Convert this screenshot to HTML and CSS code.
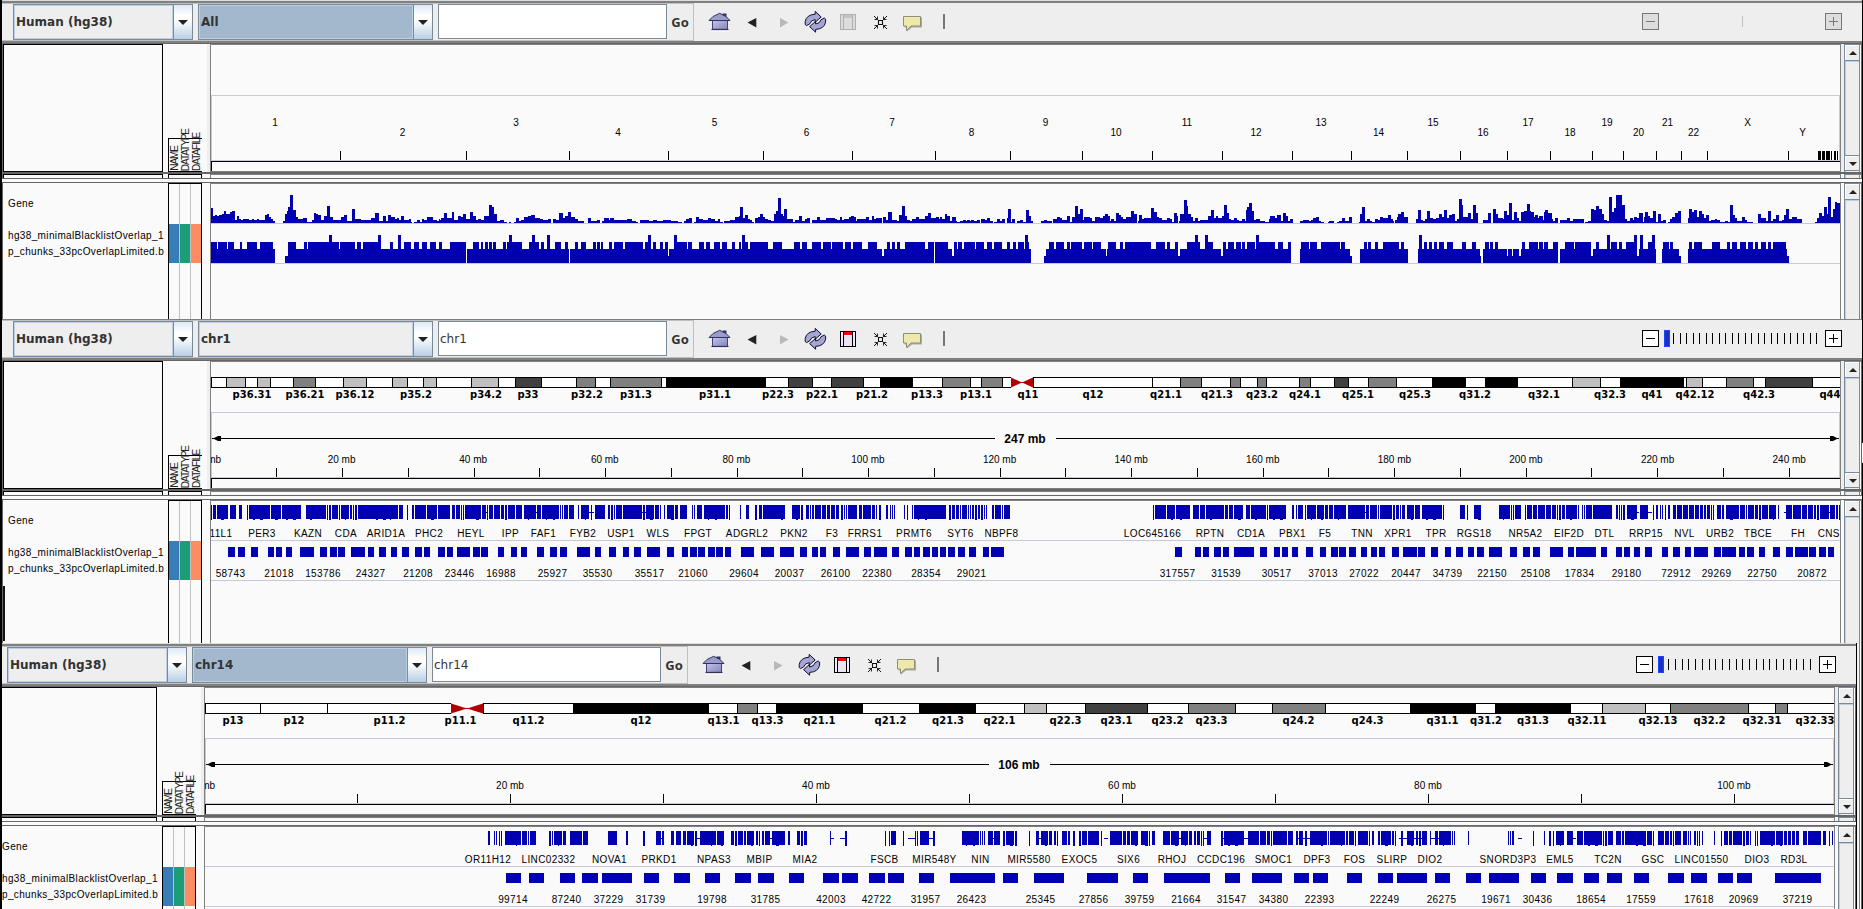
FILE: index.html
```html
<!DOCTYPE html>
<html lang="en">
<head>
<meta charset="utf-8">
<title>IGV</title>
<link rel="stylesheet" href="styles.css">
</head>
<body>
<svg class="symbols" aria-hidden="true">
  <defs>
    <linearGradient id="steel" x1="0" y1="0" x2="1" y2="1">
      <stop offset="0" stop-color="#c4c4ec"/><stop offset="1" stop-color="#8484b8"/>
    </linearGradient>
    <symbol id="i-home" viewBox="0 0 24 25">
      <path d="M3.5 21.8H21" stroke="#fff" stroke-width="1.4"/>
      <path d="M14.5 4.5h4v5h-4z" fill="#33335c"/>
      <rect x="4.5" y="11.5" width="15" height="9" fill="url(#steel)" stroke="#44447a"/>
      <path d="M1 11.5L5 7.5L11.7 4.3L18 7.5L22 11.5Z" fill="#9c9ccc" stroke="#33335c"/>
      <path d="M3.5 20.5H20.5" stroke="#33335c" stroke-width="1.3"/>
    </symbol>
    <symbol id="i-back" viewBox="0 0 24 25"><path d="M7.5 13.5L16.3 9V18.4Z" fill="#222"/></symbol>
    <symbol id="i-fwd" viewBox="0 0 24 25"><path d="M16.5 13.5L8 9V18.4Z" fill="#b9b9b9"/></symbol>
    <symbol id="i-refresh" viewBox="0 0 24 25">
      <g id="arc" fill="#a6a6d6" stroke="#0d0d2b" stroke-width="1">
        <path d="M1.200 15.500L2.600 16.600L5.800 14.800Q6.600 11.200 11.200 10.600V13.200L17.200 8L11.200 2.400V5.200Q2.600 5.600 1.200 12.500Z"/>
      </g>
      <use href="#arc" transform="rotate(180 11.4 12.8)"/>
    </symbol>
    <symbol id="i-region" viewBox="0 0 24 25">
      <rect x="4.5" y="5.5" width="15" height="15" fill="#fff" stroke="#000"/>
      <path d="M5 7h2v13H5zM17 7h2v13h-2z" fill="#ececfd"/>
      <path d="M8 10h8v10H8z" fill="#e6e6fb"/>
      <path d="M9 11h3v2H9zM13 13h3v2h-3zM8 15h3v2H8zM12 17h3v2h-3z" fill="#fbdcdc"/>
      <path d="M8 6h8v3H8z" fill="#f00"/>
      <path d="M7.5 5v16M16.5 5v16" stroke="#000"/>
    </symbol>
    <symbol id="i-region-off" viewBox="0 0 24 25">
      <rect x="4.5" y="5.5" width="15" height="15" fill="#dcdcdc" stroke="#b0b0b0"/>
      <path d="M8 6h8v3H8z" fill="#c4c4c4"/>
      <path d="M7.5 5v16M16.5 5v16" stroke="#b0b0b0"/>
    </symbol>
    <symbol id="i-fit" viewBox="0 0 24 25">
      <path d="M10.5 11.5h4v4h-4z" fill="none" stroke="#111" stroke-width="1.1"/>
      <path d="M6 7l3.8 3.8M19 7l-3.8 3.8M6 20l3.8-3.8M19 20l-3.8-3.8" stroke="#111"/>
      <path d="M6.5 10.5h3v-3M18.5 10.5h-3v-3M6.5 16.5h3v3M18.5 16.5h-3v3" fill="none" stroke="#111" stroke-width=".9"/>
    </symbol>
    <symbol id="i-tip" viewBox="0 0 24 25">
      <path d="M4.5 8.5h17.5v10h-10l-5 4v-4H4.5z" fill="#aaa"/>
      <path d="M3.5 7.5h17v9.5h-9.5L6.5 21.5V17H3.5z" fill="#eee8aa" stroke="#8f8f78"/>
    </symbol>
  </defs>
</svg>
<main class="desktop" id="desktop"></main>
<script src="tracks.js"></script>
</body>
</html>
```
FILE: styles.css
```css
* { box-sizing: border-box; }

body {
  margin: 0;
  background: #000;
  color: #000;
  font: 10px "Liberation Sans", Arial, sans-serif;
}

.symbols { position: absolute; width: 0; height: 0; }

.desktop {
  width: 1863px;
  height: 909px;
  padding: 0 1px 0 2px;
  display: flex;
  flex-direction: column;
  overflow: hidden;
}

.slot { display: flex; background: #eee; overflow: hidden; position: relative; }
.slot-1 { height: 319px; }
.slot-2 { height: 324px; }
.slot-3 { height: 266px; }

.clip { overflow: hidden; display: flex; }
.slot-3 .clip { width: 1855px; border-right: 1px solid #000; }
.slot-3 .window { margin-left: -6px; }
.behind {
  flex: 1;
  background: linear-gradient(to right, #f4f4f4 2px, #7a8a99 2px 3px, #fff 3px 4px, #666 4px);
}

.window { width: 1860px; flex: none; display: flex; flex-direction: column; background: #fafafa; }
.edge { height: 3px; flex: none; border-top: 1px solid #ddd; background: #808080; }
.slot-2 .edge { height: 1px; border: 0; }

/* toolbar */
.toolbar { height: 38px; flex: none; display: flex; background: #eee; }
.command {
  width: 692px;
  padding-left: 11px;
  display: flex;
  border: solid #c0c0c0;
  border-width: 1px 1px 1px 0;
  font: bold 12px "DejaVu Sans", sans-serif;
  color: #333;
}
.combo {
  display: flex;
  height: 36px;
  margin-right: 5px;
  border: 1px solid #7a8a99;
  background: #eee;
}
.combo.genome { width: 180px; }
.combo.chrom { width: 235px; }
.combo.lit { background: #a3b8cc; }
.combo .value {
  flex: 1;
  border: 1px solid #b8cfe5;
  line-height: 32px;
  padding-left: 1px;
}
.combo .arrow {
  width: 19px;
  border-left: 1px solid #7a8a99;
  background: linear-gradient(#dde8f3, #fff 30%, #fff 45%, #b8cfe5);
  display: flex;
  align-items: center;
  justify-content: center;
}
.combo .arrow::after {
  content: "";
  border: solid transparent;
  border-width: 5px 5px 0;
  border-top-color: #222;
}
.locus {
  width: 229px;
  height: 35px;
  border: 1px solid #7a8a99;
  background: #fff;
  font-weight: normal;
  line-height: 34px;
  padding-left: 1px;
}
.go { flex: 1; text-align: center; line-height: 37px; font-family: "Noto Sans", sans-serif; font-size: 13px; }
.icons { display: flex; padding: 6px 0 0 10px; }
.icons svg { width: 24px; height: 25px; margin: 0 4px; }
.bar { width: 2px; height: 15px; margin: 11px 0 0 15px; background: #777; }
.zoomer { margin: 10px 20px 0 auto; display: flex; height: 17px; }
.zoomer svg { display: block; }

/* split panes */
.split { height: 3px; flex: none; background: linear-gradient(#808080 2px, #666 2px); }
.split-mid { height: 2px; flex: none; background: #666; }
.split-low { height: 5px; flex: none; border: solid #666; border-width: 1px 0; background: #fafafa; }

.row { display: flex; flex: none; border-left: 1px solid #666; border-right: 1px solid #666; }
.row.head { height: 128px; }
.row.strip { height: 4px; }
.row.body { flex: 1; }
.names { width: 160px; flex: none; background: #fafafa; }
.head .names { border: 1px solid #000; }
.strip .names { border: 1px solid #000; border-bottom: 0; }
.attrs { width: 34px; flex: none; margin: 0 5px; }
.strip .attrs, .body .attrs { border: 1px solid #000; border-bottom: 0; }
.gutter { width: 3px; flex: none; background: #eee; }
.body .gutter, .strip .gutter { background: #fafafa; }
.data { width: 1631px; flex: none; border: 1px solid #808080; overflow: hidden; }
.strip .data, .body .data { border-bottom: 0; }
.data svg { display: block; }

.body .names { padding: 13px 0 0 5px; line-height: 16px; letter-spacing: .36px; white-space: nowrap; }
.body .names p { margin: 0; }
.body .names p + p { margin-top: 16px; }

.head .attrs { display: flex; align-items: flex-end; }
.attr-box {
  width: 34px;
  height: 34px;
  border: solid #000;
  border-width: 1px 0 1px 1px;
  display: flex;
  align-items: flex-end;
}
.attr-box span {
  width: 11px;
  line-height: 11px;
  writing-mode: vertical-rl;
  transform: rotate(180deg);
  letter-spacing: -1.05px;
  white-space: nowrap;
  color: #222;
}
.body .attrs { display: grid; grid-template-columns: 10px 10px 10px; gap: 1px; background: #c0c0c0; }
.body .attrs i { background: linear-gradient(#fafafa 40px, var(--fill) 40px 79px, #fafafa 79px); }
.swatch-name { --fill: #377eb8; }
.swatch-type { --fill: #1b9e77; }
.swatch-file { --fill: #fc8d62; }

.scroll {
  width: 17px;
  flex: none;
  border: solid #7a8a99;
  border-width: 1px 0 0 1px;
  display: flex;
  flex-direction: column;
  background: linear-gradient(to right, #b8cfe5 1px, #eee 1px 14px, #7a8a99 14px 15px, #fff 15px);
}
.scroll b {
  height: 15px;
  width: 14px;
  border: solid #fff;
  border-width: 1px 0 0 1px;
  background: #eee;
  display: flex;
  align-items: center;
  justify-content: center;
}
.scroll b.up { box-shadow: 0 1px #7a8a99, 0 2px #b8cfe5; }
.scroll b.down { height: 14px; margin-top: auto; box-shadow: 0 -1px #7a8a99, 0 1px #7a8a99; }
.head .scroll { padding-bottom: 2px; }
.scroll b::after { content: ""; border: solid transparent; }
.scroll .up::after { border-width: 0 4px 4px; border-bottom-color: #222; }
.scroll .down::after { border-width: 4px 4px 0; border-top-color: #222; margin-top: 1px; }

/* drawn tracks */
.label { text-anchor: middle; font-size: 10px; }
.feature-label { text-anchor: middle; font-size: 10px; letter-spacing: .38px; }
.feature-label.to-left { text-anchor: end; }
.band-label { text-anchor: middle; font: bold 10px "DejaVu Sans", sans-serif; }
.span-label { text-anchor: middle; font-weight: bold; font-size: 12px; }
.blue { fill: #0000b2; }
.rule { fill: #c8c8d8; }
.red { fill: #b20000; }

/* fragments of windows lying underneath */
.sliver-left { position: absolute; left: 1px; top: 267px; width: 2px; height: 55px; background: #111; }
.sliver-right { position: absolute; right: -1px; top: 124px; width: 1px; height: 20px; background: #fff; }
.slot-2 { overflow: visible; }
```
FILE: tracks.js
```js
// Pixel positions are window x coordinates; y is measured from the top of each window.
const BLUE = 'class="blue"';
const rect = (x, y, w, h, attr = '') => `<rect x="${x}" y="${y}" width="${w}" height="${h}" ${attr}/>`;
const pairs = s => s.trim().split(/[\s,]+/).map(p => p.split(':'));
const text = (x, y, t, cls) => `<text x="${x}" y="${y}" class="${cls}">${t}</text>`;

// x:height steps; each piece has its own origin and stretch
const geneDensity = [
  { from: 211, k: 1, end: 440, bins: `211:15 213:7 215:8 217:7 219:8 222:9 224:12 226:9 230:11 232:12 235:3 237:7 239:4 241:3 243:4 249:3 252:4 254:3 257:4 259:3 265:8 267:9 269:6 271:4 273:2 275:0 283:2 285:9 287:12 288:16 290:28 293:13 296:6 298:4 303:5 307:1 312:3 314:10 316:9 318:8 321:3 324:7 327:17 330:6 333:3 341:6 344:8 347:2 352:14 355:4 361:3 367:3 371:5 375:10 379:2 383:7 386:2 388:8 391:6 395:4 397:5 399:3 401:7 404:3 409:4 411:1 412:0 414:1 417:3 420:1 422:4 424:3 427:6 433:3 437:2 439:4` },
  { from: 440, k: 1.0332, end: 960, bins: `440:3 441:5 444:10 447:5 452:11 454:3 457:7 460:6 462:9 465:4 469:11 472:7 475:3 477:4 480:3 483:7 487:18 490:16 492:9 495:2 498:3 502:1 505:0 507:1 509:0 512:1 514:5 516:2 518:3 521:6 525:7 528:8 532:5 537:4 540:3 545:4 547:0 549:4 552:3 555:10 559:5 561:7 564:11 567:6 571:4 574:2 579:0 583:5 586:2 592:3 595:0 597:2 599:5 604:3 605:5 608:3 613:3 621:4 626:2 630:1 632:0 634:3 642:2 646:3 650:2 656:3 664:2 670:1 674:0 676:2 678:4 681:5 684:0 686:1 688:6 691:4 695:3 699:5 702:4 706:2 709:4 711:1 714:0 715:2 721:3 726:6 729:7 730:16 733:5 735:8 738:4 740:3 742:1 744:0 745:5 748:6 750:9 753:6 755:4 757:3 760:2 763:9 765:12 767:25 770:9 772:7 773:14 776:4 782:1 784:3 787:7 790:2 793:4 795:5 798:0 800:3 805:6 808:3 814:5 822:4 824:3 827:6 829:3 831:4 836:6 838:7 841:6 843:2 844:4 849:4 852:6 855:3 858:7 860:4 862:5 868:0 869:6 872:3 874:11 877:3 882:2 884:8 887:17 890:7 892:3 895:2 897:4 901:6 904:4 909:7 912:10 915:5 920:6 923:4 924:6 926:4 929:9 931:7 934:2 936:6 939:2 940:1` },
  { from: 960, k: 1, end: 1840, bins: `960:2 963:3 966:2 967:3 970:2 971:3 974:2 977:3 980:0 981:4 985:3 987:5 990:2 993:0 994:1 997:4 1000:2 1002:4 1005:0 1007:5 1008:14 1011:1 1012:4 1015:0 1017:2 1020:3 1023:1 1026:13 1029:7 1031:2 1033:0 1041:2 1044:3 1047:2 1052:0 1053:4 1057:6 1060:5 1062:3 1064:3 1067:7 1070:1 1072:6 1075:17 1078:9 1080:14 1083:3 1084:6 1090:5 1092:2 1095:6 1100:5 1103:7 1105:9 1108:7 1110:2 1111:4 1114:2 1116:10 1119:8 1121:6 1123:4 1126:6 1131:12 1134:9 1137:0 1138:2 1139:8 1142:4 1144:5 1151:15 1154:11 1157:6 1159:5 1162:3 1167:5 1170:4 1172:1 1174:10 1177:7 1178:0 1179:2 1180:9 1184:23 1187:17 1188:9 1191:6 1193:2 1195:5 1198:2 1200:3 1208:7 1211:13 1214:5 1216:7 1218:5 1222:7 1224:18 1227:10 1229:4 1231:3 1234:5 1237:3 1239:2 1242:4 1245:2 1246:13 1247:16 1249:20 1252:12 1254:3 1256:4 1260:2 1265:1 1269:4 1270:7 1275:5 1277:8 1281:2 1283:10 1286:7 1288:2 1290:4 1293:0 1300:2 1303:3 1309:2 1311:3 1313:5 1316:6 1319:2 1321:1 1324:0 1328:1 1329:2 1334:0 1337:1 1339:2 1342:5 1345:2 1349:6 1352:0 1359:1 1360:9 1362:16 1365:2 1367:4 1370:2 1372:1 1375:4 1378:3 1380:6 1383:5 1388:8 1391:4 1393:2 1394:0 1395:3 1397:6 1398:9 1401:11 1404:6 1408:0 1416:4 1418:13 1421:3 1423:2 1425:4 1427:12 1430:5 1433:4 1436:5 1439:9 1442:6 1444:13 1447:5 1449:8 1452:9 1455:2 1457:4 1459:24 1462:18 1463:6 1468:10 1471:4 1473:18 1476:10 1478:0 1483:3 1488:10 1491:0 1493:14 1496:9 1498:5 1503:4 1504:12 1507:8 1509:20 1512:3 1514:11 1517:5 1519:2 1521:11 1524:12 1527:19 1530:12 1531:11 1534:6 1535:8 1538:5 1539:7 1543:3 1544:11 1545:13 1548:10 1552:4 1553:2 1555:5 1558:0 1560:3 1567:5 1570:2 1573:4 1584:0 1585:1 1588:2 1591:14 1594:13 1596:17 1599:14 1602:9 1604:3 1607:2 1609:26 1612:11 1614:15 1616:28 1622:18 1625:4 1627:2 1630:5 1633:3 1634:6 1637:5 1639:10 1643:1 1644:6 1645:11 1648:7 1650:5 1653:12 1656:1 1658:9 1661:2 1663:3 1666:0 1668:1 1670:4 1672:6 1675:10 1678:12 1681:0 1688:5 1689:14 1692:11 1694:13 1697:6 1699:12 1702:9 1704:5 1706:8 1709:2 1711:3 1715:4 1717:3 1720:1 1725:2 1728:1 1730:18 1733:8 1735:5 1737:2 1742:6 1745:3 1747:1 1753:0 1758:9 1761:5 1766:2 1768:12 1771:2 1773:4 1776:8 1779:2 1782:3 1784:8 1786:14 1789:4 1792:6 1797:4 1802:0 1815:1 1817:5 1819:10 1822:7 1824:16 1827:9 1828:26 1831:6 1833:14 1835:21 1837:20` }
];

const chunkDensity = [
  { from: 211, k: 1, end: 440, bins: `211:3 217:2 218:3 227:2 228:3 234:2 240:3 242:2 247:3 257:2 260:3 273:2 275:0 285:1 288:3 296:2 304:3 307:2 308:3 329:4 332:3 339:2 340:3 355:2 357:3 361:2 363:3 378:4 381:2 390:3 393:2 398:4 401:2 404:3 411:2 414:3 419:2 422:3 427:2 430:3 436:2 439:3` },
  { from: 440, k: 1.0332, end: 960, bins: `440:3 442:2 450:3 465:0 466:2 472:3 478:2 480:3 482:2 484:3 486:2 487:3 490:2 491:3 494:2 501:3 504:2 505:3 507:4 510:3 519:2 526:3 529:4 532:3 536:2 538:3 541:2 544:4 546:2 551:3 557:2 561:3 564:2 565:0 566:2 571:3 574:2 576:3 581:2 588:3 591:2 592:3 595:2 596:3 598:2 604:3 606:2 608:3 617:2 619:3 636:2 638:3 641:4 644:2 646:3 649:2 653:3 656:2 658:3 661:1 662:2 666:4 669:3 679:2 680:3 684:2 691:3 696:2 697:3 701:2 705:3 711:2 713:3 718:2 723:3 726:2 729:3 731:2 732:4 735:3 738:2 740:3 757:2 762:3 771:2 783:3 788:2 790:3 795:2 800:3 809:2 811:3 818:2 819:3 830:2 832:3 838:2 840:3 848:2 854:3 863:2 868:1 870:2 873:3 876:2 877:3 880:2 882:3 885:2 890:3 909:2 912:3 918:0 919:3 932:2 936:1 937:3 940:2 941:3` },
  { from: 960, k: 1, end: 1840, bins: `960:3 962:2 964:3 975:2 976:3 984:2 987:3 992:2 994:3 1002:2 1007:3 1010:2 1013:3 1016:2 1018:3 1024:2 1025:4 1028:3 1029:2 1031:0 1044:1 1046:2 1049:3 1054:2 1056:3 1064:2 1067:3 1070:2 1071:3 1082:2 1084:3 1092:2 1093:3 1101:2 1106:1 1107:2 1108:3 1116:2 1120:3 1123:2 1125:3 1151:2 1156:3 1165:2 1167:3 1170:2 1175:3 1178:1 1180:2 1187:3 1195:4 1198:3 1200:2 1205:4 1208:3 1213:2 1221:1 1223:3 1226:2 1228:3 1234:2 1236:3 1241:2 1242:3 1245:2 1247:3 1255:2 1256:4 1259:3 1275:2 1278:3 1283:2 1288:3 1291:0 1300:2 1301:3 1309:2 1310:3 1317:2 1321:3 1340:2 1341:3 1345:2 1350:1 1352:0 1360:2 1364:3 1367:2 1368:3 1371:2 1375:3 1378:2 1383:3 1399:2 1401:3 1404:2 1408:0 1418:2 1419:4 1422:2 1424:3 1427:2 1429:3 1432:2 1434:3 1437:2 1439:3 1444:2 1447:3 1453:2 1462:3 1466:2 1472:3 1476:2 1480:1 1481:0 1483:2 1485:3 1489:2 1490:3 1493:2 1495:3 1498:2 1507:1 1508:2 1512:1 1513:2 1519:1 1521:2 1522:3 1525:2 1529:3 1538:2 1539:3 1543:2 1544:3 1548:2 1553:3 1558:0 1560:2 1565:3 1574:2 1575:3 1591:1 1593:2 1596:3 1599:2 1607:4 1610:2 1611:3 1617:2 1619:3 1622:2 1626:3 1634:4 1637:1 1639:2 1640:4 1643:2 1648:3 1652:4 1655:2 1656:0 1662:2 1663:3 1669:2 1670:3 1673:2 1679:1 1681:0 1688:2 1689:3 1692:2 1694:3 1702:2 1712:3 1720:2 1727:3 1730:2 1732:3 1737:2 1740:3 1746:2 1748:3 1753:2 1755:3 1758:2 1761:3 1766:2 1768:3 1771:2 1773:3 1786:2 1787:1 1789:0` }
];

function histogram(pieces, base, unit) {
  let out = '';
  for (const p of pieces) {
    const bins = pairs(p.bins).map(([x, h]) => [Math.round(p.from + (x - p.from) * p.k), h * unit]);
    bins.forEach(([x, h], i) => {
      const next = i + 1 < bins.length ? bins[i + 1][0] : p.end;
      if (h && next > x) out += rect(x, base - h, next - x, h, BLUE);
    });
  }
  return out;
}

const runs = s => s.trim().split(/\s+/).map(r => r.split('-').map(Number));

// Exons as tall blocks (a few reach one pixel lower), introns as thin lines
function genes(blocks, lines) {
  let out = '';
  for (const [a, b] of runs(blocks)) {
    out += rect(a, 188, b - a, 14, BLUE);
    if (b - a < 3) out += rect(a, 202, b - a, a % 2, BLUE);
    for (let x = a + 4; x < b - 2; x += 7) if ((x * 7) % 5 < 3) out += rect(x, 202, 1 + x % 3, 1, BLUE);
  }
  for (const [a, b] of runs(lines)) out += rect(a, 195, b - a, 1, BLUE);
  return out;
}
const blocks = s => runs(s).map(([a, b]) => rect(a, 230, b - a, 10, BLUE)).join('');
const labels = (s, y, cls) => pairs(s).map(([x, t]) => text(x, y, t, cls)).join('');

const shade = { w: '#fff', a: '#c0c0c0', b: '#808080', c: '#404040', k: '#000' };
function ideogram(spec, centre, end) {
  const bands = pairs(spec);
  let out = rect(bands[0][0], 60, end - bands[0][0], 11, 'fill="#000"');
  bands.forEach(([x, c], i) => {
    const next = i + 1 < bands.length ? +bands[i + 1][0] : end;
    if (c !== 'x') out += rect(+x + 1, 61, next - x - 1, 9, `fill="${shade[c]}"`);
  });
  const [a, b] = centre, m = (a + b) / 2;
  out += rect(a, 60, b - a, 11, 'fill="#fafafa"');
  out += `<path class="red" d="M${a} 60.5L${m} 65.5L${a} 70.5ZM${b} 60.5L${m} 65.5L${b} 70.5Z"/>` + rect(m - 4, 65, 8, 1, 'class="red"');
  return out + rect(b, 60, 1, 11);
}

function rulerFrame(x0) {
  return rect(x0, 95, 1629, 1, 'class="rule"') + rect(x0, 95, 1, 66, 'class="rule"') +
    rect(x0 + 1628, 95, 1, 66, 'class="rule"') + rect(x0, 160, 1629, 1, 'class="rule"') +
    rect(x0, 161, 1629, 1) + rect(x0, 161, 1, 10);
}
function spanLine(x0, label) {
  const r = x0 + 1628;
  return rect(x0 + 1, 121, 783, 1) + rect(x0 + 845, 121, 783, 1) +
    `<path d="M${x0 + 2} 121.5l5-2.5h3v5h-3zM${r - 1} 121.5l-5-2.5h-3v5h3z"/>` +
    text(x0 + 814, 126, label, 'span-label');
}
const ticks = xs => xs.map(x => rect(x, 151, 1, 9)).join('');

const views = [
  {
    x0: 211, chrom: 'All', locus: '', lit: true, off: true,
    head: () => ticks([340, 466, 569, 668, 763, 852, 935, 1010, 1082, 1152, 1222, 1292, 1351, 1407, 1460, 1507, 1550, 1592, 1623, 1656, 1681, 1707, 1788, 1831, 1837]) +
      rect(1818, 151, 3, 9) + rect(1822, 151, 3, 9) + rect(1826, 151, 4, 9) + rect(1834, 151, 2, 9) +
      labels('275:1 516:3 714.5:5 892:7 1045.5:9 1187:11 1321:13 1433:15 1528:17 1607:19 1667.5:21 1747.5:X', 126, 'label') +
      labels('402.5:2 618:4 806.5:6 971.5:8 1116:10 1256:12 1378.5:14 1483:16 1570:18 1638.5:20 1693.5:22 1802.5:Y', 136, 'label'),
    body: () => histogram(geneDensity, 223, 1) + histogram(chunkDensity, 263, 7)
  },
  {
    x0: 211, chrom: 'chr1', locus: 'chr1', count: 23, first: 1673, step: 6.5,
    head: () => ideogram('211:w 226:a 245:w 257:a 270:w 293:b 315:w 343:a 366:w 392:a 407:w 423:a 436:w 471:a 498:w 515:c 541:w 576:b 595:w 610:b 661:w 666:k 765:w 788:c 812:w 831:c 863:w 880:k 912:w 942:b 970:w 981:b 1002:w 1011:x 1033:w 1152:w 1180:b 1201:w 1230:b 1240:w 1257:b 1266:w 1299:b 1310:w 1334:c 1348:w 1368:b 1396:w 1432:k 1465:w 1485:k 1517:w 1572:a 1600:w 1620:k 1683:w 1686:a 1702:w 1726:b 1753:w 1765:c 1812:w', [1011, 1033], 1841) +
      labels('252:p36.31 305:p36.21 355:p36.12 416:p35.2 486:p34.2 528:p33 587:p32.2 636:p31.3 715:p31.1 778:p22.3 822:p22.1 872:p21.2 927:p13.3 976:p13.1 1028:q11 1093:q12 1166:q21.1 1217:q21.3 1262:q23.2 1305:q24.1 1358:q25.1 1415:q25.3 1475:q31.2 1544:q32.1 1610:q32.3 1652:q41 1695:q42.12 1759:q42.3 1830:q44', 81, 'band-label') +
      spanLine(211, '247 mb') +
      ticks([276, 342, 408, 474, 539, 605, 671, 737, 802, 868, 934, 1000, 1065, 1131, 1197, 1263, 1328, 1394, 1460, 1526, 1591, 1657, 1723, 1789]) +
      [0, 20, 40, 60, 80, 100, 120, 140, 160, 180, 200, 220, 240].map((n, i) => text(210 + i * 131.6, 146, n + ' mb', 'label')).join(''),
    body: () => genes('211-212 213-216 217-228 230-236 239-242 247-248 249-270 271-281 282-301 306-326 327-328 329-331 332-338 339-340 341-349 350-352 353-354 355-357 358-398 399-403 407-408 412-414 415-426 427-437 438-450 452-455 456-460 461-462 463-464 465-481 482-486 487-488 489-493 494-500 501-504 505-507 508-515 516-522 524-536 537-541 542-559 560-561 562-563 564-568 569-574 578-579 581-589 591-592 595-605 608-610 611-613 614-615 616-622 623-642 643-645 646-654 655-659 660-661 664-665 667-674 675-678 680-687 692-693 694-695 697-702 704-725 726-728 729-730 740-741 746-749 755-757 759-762 763-785 792-800 801-803 806-809 810-811 812-814 815-821 822-826 827-830 831-835 836-839 841-843 844-845 846-847 848-857 859-862 863-871 872-875 876-877 879-881 886-888 890-891 892-893 894-895 904-905 907-908 912-913 914-946 949-951 952-955 956-959 960-961 962-967 968-969 970-971 972-974 975-977 978-980 981-983 984-985 986-987 992-994 995-1001 1002-1003 1004-1010 1153-1154 1155-1166 1167-1175 1176-1190 1193-1199 1200-1205 1206-1224 1225-1228 1229-1233 1234-1243 1246-1250 1251-1266 1267-1268 1269-1286 1292-1294 1296-1297 1298-1303 1305-1306 1307-1316 1317-1324 1325-1328 1329-1333 1334-1346 1348-1365 1366-1369 1370-1377 1378-1379 1380-1392 1393-1395 1396-1399 1400-1401 1402-1405 1407-1414 1415-1420 1422-1442 1443-1444 1460-1465 1467-1468 1474-1481 1499-1510 1511-1512 1513-1514 1515-1521 1525-1526 1527-1532 1533-1537 1538-1545 1546-1551 1552-1556 1557-1558 1559-1561 1562-1565 1566-1577 1578-1579 1582-1583 1584-1585 1586-1592 1593-1612 1616-1618 1619-1620 1621-1622 1623-1625 1627-1637 1640-1648 1653-1654 1656-1658 1660-1661 1662-1663 1665-1666 1668-1670 1673-1676 1677-1682 1683-1688 1689-1694 1695-1699 1700-1703 1704-1706 1707-1710 1711-1712 1713-1714 1717-1721 1722-1724 1726-1739 1740-1745 1746-1747 1748-1754 1755-1758 1759-1761 1762-1768 1769-1776 1778-1779 1786-1792 1793-1801 1802-1807 1808-1813 1814-1816 1817-1819 1820-1829 1830-1835 1836-1838 1839-1840',
      '484-488 534-538 588-594 642-648 1364-1367 1636-1639 1647-1652 1784-1786 1828-1831') +
      text(232.5, 220, '11L1', 'feature-label to-left') +
      labels('262:PER3 308:KAZN 346:CDA 386:ARID1A 429:PHC2 471:HEYL 510.5:IPP 543.5:FAF1 583:FYB2 621:USP1 658:WLS 698:FPGT 747:ADGRL2 794:PKN2 832:F3 865:FRRS1 914:PRMT6 960.5:SYT6 1001.5:NBPF8 1152.5:LOC645166 1210:RPTN 1251:CD1A 1292.5:PBX1 1325:F5 1362:TNN 1398:XPR1 1436:TPR 1474:RGS18 1525.5:NR5A2 1569:EIF2D 1604.5:DTL 1646:RRP15 1684.5:NVL 1720:URB2 1758:TBCE 1798:FH 1832:CNST', 220, 'feature-label') +
      blocks('228-235 238-245 251-258 268-274 276-282 286-292 300-314 320-327 330-337 338-345 351-365 368-374 379-386 391-397 402-409 415-422 424-430 438-445 447-453 457-470 473-480 481-488 498-504 511-517 521-527 537-544 550-557 560-567 577-590 595-601 609-616 623-629 634-641 647-660 667-674 682-688 690-697 698-705 708-715 716-723 725-731 741-754 761-774 780-794 800-807 812-818 820-826 833-840 846-859 864-871 874-887 892-899 905-912 914-920 923-930 932-938 940-946 948-955 958-965 969-976 983-989 991-1004 1175-1182 1195-1201 1203-1209 1214-1221 1223-1229 1234-1254 1260-1267 1274-1280 1282-1288 1292-1298 1306-1313 1320-1326 1331-1338 1339-1346 1349-1356 1361-1367 1371-1377 1379-1385 1392-1399 1403-1417 1418-1425 1431-1438 1445-1451 1456-1463 1468-1474 1477-1484 1489-1502 1510-1517 1523-1530 1533-1540 1550-1563 1568-1574 1576-1596 1601-1607 1616-1622 1624-1630 1634-1640 1645-1652 1662-1668 1673-1680 1685-1691 1694-1708 1714-1721 1722-1736 1739-1745 1747-1754 1759-1765 1773-1780 1786-1793 1795-1808 1809-1816 1819-1826 1828-1834') +
      labels('230.5:58743 279:21018 323:153786 370.5:24327 418:21208 459.5:23446 501:16988 552.5:25927 597.5:35530 649.5:35517 693:21060 744:29604 789.5:20037 835.5:26100 877:22380 926:28354 971.5:29021 1177.5:317557 1226:31539 1276.5:30517 1323:37013 1364:27022 1406:20447 1447.5:34739 1492:22150 1535.5:25108 1579.5:17834 1626.5:29180 1676:72912 1716.5:29269 1762:22750 1812:20872', 260, 'feature-label')
  },
  {
    x0: 205, chrom: 'chr14', locus: 'chr14', lit: true, count: 22, first: 1674, step: 6.76,
    head: () => ideogram('205:w 260:w 327:w 451:x 483:w 573:k 708:w 737:b 757:w 776:k 862:w 919:k 975:w 1024:a 1046:w 1085:c 1147:w 1188:b 1235:w 1272:b 1325:w 1410:k 1475:w 1495:k 1570:w 1602:a 1645:w 1670:b 1748:w 1775:b 1787:w', [451, 483], 1835) +
      labels('233:p13 294:p12 389.5:p11.2 460.5:p11.1 528.5:q11.2 641:q12 723.5:q13.1 767.5:q13.3 819.5:q21.1 890.5:q21.2 948:q21.3 999.5:q22.1 1065.5:q22.3 1116.5:q23.1 1167.5:q23.2 1211.5:q23.3 1298.5:q24.2 1367.5:q24.3 1442.5:q31.1 1486:q31.2 1533:q31.3 1587:q32.11 1658:q32.13 1709.5:q32.2 1762:q32.31 1815:q32.33', 81, 'band-label') +
      spanLine(205, '106 mb') +
      ticks([357, 510, 663, 816, 969, 1122, 1275, 1428, 1581, 1734]) +
      [0, 20, 40, 60, 80, 100].map((n, i) => text(204 + i * 306, 146, n + ' mb', 'label')).join(''),
    body: () => genes('488-490 494-495 496-497 499-500 501-502 505-521 522-527 528-529 530-536 549-551 552-553 554-562 563-566 570-582 583-588 608-617 626-628 643-645 656-661 662-664 671-674 676-681 683-686 687-694 695-697 700-716 717-724 731-734 735-737 738-743 744-746 747-754 756-758 759-760 762-764 765-770 772-785 788-790 797-800 801-803 804-807 830-831 845-847 885-886 889-890 891-896 903-904 915-916 917-918 920-929 933-935 962-979 980-981 982-983 984-985 988-993 994-1000 1003-1005 1006-1014 1015-1017 1029-1030 1036-1039 1041-1048 1049-1052 1054-1056 1057-1058 1062-1067 1068-1070 1073-1075 1079-1081 1082-1087 1088-1099 1101-1102 1110-1122 1123-1126 1127-1130 1131-1138 1141-1148 1149-1150 1152-1155 1163-1170 1171-1179 1181-1188 1189-1192 1194-1196 1197-1200 1201-1202 1203-1204 1207-1211 1221-1223 1224-1244 1248-1259 1260-1266 1267-1270 1271-1272 1273-1287 1288-1293 1296-1298 1299-1303 1305-1307 1310-1327 1328-1329 1330-1345 1346-1348 1349-1354 1355-1356 1358-1368 1369-1370 1372-1374 1378-1380 1381-1391 1392-1394 1395-1396 1401-1403 1407-1414 1416-1418 1419-1421 1422-1427 1430-1431 1435-1438 1439-1451 1452-1453 1454-1455 1468-1469 1508-1509 1510-1511 1512-1514 1533-1534 1544-1545 1549-1551 1553-1554 1556-1564 1567-1573 1577-1583 1584-1602 1603-1604 1605-1607 1608-1613 1616-1621 1622-1624 1625-1646 1647-1652 1653-1654 1658-1664 1665-1669 1670-1672 1673-1674 1675-1681 1683-1687 1688-1689 1690-1691 1694-1696 1697-1698 1699-1700 1702-1703 1714-1715 1721-1722 1724-1728 1729-1732 1733-1742 1743-1745 1746-1749 1750-1751 1755-1756 1757-1758 1760-1775 1776-1783 1784-1787 1788-1791 1792-1795 1796-1799 1803-1807 1808-1821 1823-1826 1829-1830 1832-1833',
      '660-663 697-700 769-773 830-834 840-846 908-916 928-934 991-995 1038-1042 1104-1108 1178-1182 1203-1208 1221-1225 1243-1249 1297-1300 1303-1311 1399-1408 1413-1423 1430-1440 1518-1522 1572-1576') +
      labels('488:OR11H12 548.5:LINC02332 609.5:NOVA1 659:PRKD1 714:NPAS3 759.5:MBIP 805:MIA2 884.5:FSCB 934.5:MIR548Y 980.5:NIN 1029:MIR5580 1079.5:EXOC5 1128.5:SIX6 1172:RHOJ 1221:CCDC196 1273.5:SMOC1 1317:DPF3 1354.5:FOS 1392:SLIRP 1430:DIO2 1508:SNORD3P3 1560:EML5 1608:TC2N 1653:GSC 1701.5:LINC01550 1757:DIO3 1794:RD3L', 220, 'feature-label') +
      blocks('506-521 529-544 560-575 582-598 602-632 644-659 674-690 705-720 735-751 758-774 789-804 823-839 842-858 869-885 888-904 919-934 950-995 1003-1018 1034-1064 1087-1118 1133-1148 1164-1210 1225-1240 1252-1282 1294-1309 1313-1328 1347-1362 1378-1393 1397-1427 1435-1450 1466-1481 1489-1519 1531-1546 1557-1573 1584-1599 1607-1622 1634-1649 1668-1684 1691-1707 1718-1733 1737-1752 1775-1821') +
      labels('513:99714 566.5:87240 608.5:37229 650.5:31739 712:19798 765.5:31785 831:42003 876.5:42722 925.5:31957 971.5:26423 1040.5:25345 1093.5:27856 1139.5:39759 1186:21664 1231.5:31547 1273.5:34380 1319.5:22393 1384.5:22249 1441.5:26275 1496:19671 1537.5:30436 1591:18654 1641:17559 1699:17618 1743.5:20969 1797.5:37219', 260, 'feature-label')
  }
];

function zoomer(v) {
  const ink = v.off ? '#777' : '#000', fill = v.off ? '#ddd' : '#fff';
  const shift = v.x0 - 211;
  const box = (x, plus) => `<rect x="${x + .5}" y=".5" width="16" height="16" fill="${fill}" stroke="${ink}"/>` +
    rect(x + 4, 8, 9, 1, `fill="${ink}"`) + (plus ? rect(x + 8, 4, 1, 9, `fill="${ink}"`) : '');
  let marks = '';
  if (v.off) marks = rect(100, 3, 1, 11, 'fill="#c0c0c0"');
  else {
    for (let i = 0; i < v.count; i++) marks += rect(Math.round(v.first - shift - 1642 + i * v.step - (shift ? 6 : 0)), 3, 1, 11);
    marks += rect(22, 0, 6, 17, 'fill="#1e46ff"') + rect(23, 1, 4, 15, 'fill="#1a2fc4"');
  }
  return `<svg width="200" height="17">${box(0)}${marks}${box(183, true)}</svg>`;
}

const icon = id => `<svg><use href="#i-${id}"/></svg>`;
const combo = (cls, value) => `<div class="combo ${cls}"><span class="value">${value}</span><span class="arrow"></span></div>`;

function windowMarkup(v, i) {
  return `<section class="slot slot-${i + 1}"><div class="clip"><div class="window">
    <div class="edge"></div>
    <div class="toolbar">
      <div class="command">${combo('genome', 'Human (hg38)')}${combo('chrom' + (v.lit ? ' lit' : ''), v.chrom)}
        <div class="locus">${v.locus}</div><div class="go">Go</div></div>
      <div class="icons">${['home', 'back', 'fwd', 'refresh', v.off ? 'region-off' : 'region', 'fit', 'tip'].map(icon).join('')}</div>
      <div class="bar"></div>
      <div class="zoomer">${zoomer(v)}</div>
    </div>
    <div class="split"></div>
    <div class="row head">
      <div class="names"></div>
      <div class="attrs"><div class="attr-box"><span>NAME</span><span>DATATYPE</span><span>DATAFILE</span></div></div>
      <div class="gutter"></div>
      <div class="data"><svg width="1629" height="126" viewBox="${v.x0} 45 1629 126">${rulerFrame(v.x0)}${v.head()}</svg></div>
      <div class="gutter"></div>
      <div class="scroll"><b class="up"></b><b class="down"></b></div>
    </div>
    <div class="split-mid"></div>
    <div class="row strip"><div class="names"></div><div class="attrs"></div><div class="gutter"></div><div class="data"></div><div class="gutter"></div><div class="scroll"></div></div>
    <div class="split-low"></div>
    <div class="row body">
      <div class="names"><p>Gene</p><p>hg38_minimalBlacklistOverlap_1<br>p_chunks_33pcOverlapLimited.b</p></div>
      <div class="attrs"><i class="swatch-name"></i><i class="swatch-type"></i><i class="swatch-file"></i></div>
      <div class="gutter"></div>
      <div class="data"><svg width="1629" height="80" viewBox="${v.x0} 184 1629 80">${rect(v.x0, 223, 1629, 1, 'class="rule"')}${rect(v.x0, 263, 1629, 1, 'class="rule"')}${v.body()}</svg></div>
      <div class="gutter"></div>
      <div class="scroll"><b class="up"></b></div>
    </div>
  </div></div>${i === 1 ? '<i class="sliver-left"></i><i class="sliver-right"></i>' : ''}${i === 2 ? '<div class="behind"></div>' : ''}</section>`;
}

document.getElementById('desktop').innerHTML = views.map(windowMarkup).join('');
```
